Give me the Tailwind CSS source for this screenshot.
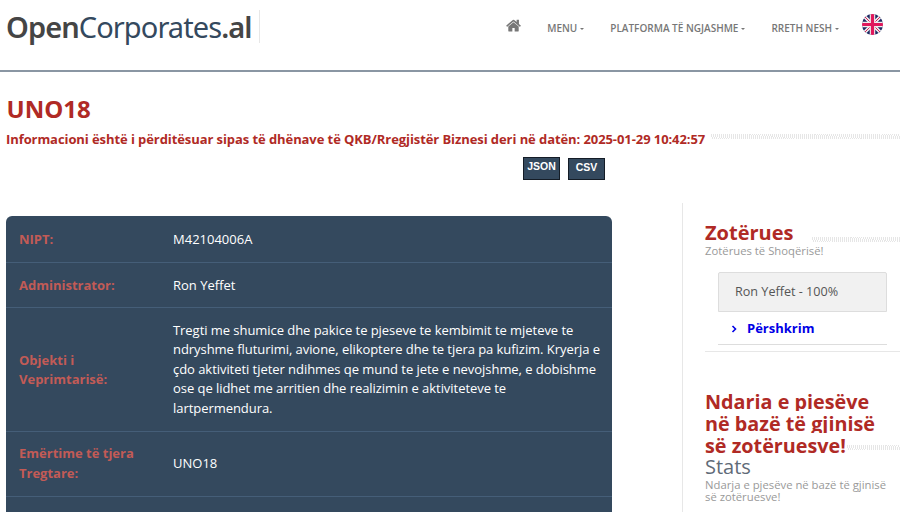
<!DOCTYPE html>
<html lang="sq">
<head>
  <meta charset="UTF-8" />
  <title>UNO18 - OpenCorporates.al</title>
  <script src="https://cdn.jsdelivr.net/npm/@tailwindcss/browser@4"></script>
</head>
<body class="bg-white font-['Open_Sans',sans-serif] text-[#333] h-[512px] w-[900px] overflow-hidden">

  <!-- Navbar -->
  <header class="h-[72px] border-b-2 border-[#8a96a3] flex justify-between">
    <div class="pl-[6px] pt-[10px] flex items-start">
      <div class="h-[33px] w-[254px] border-r border-[#e7e7e7] font-['Noto_Sans',sans-serif] text-[29px] leading-[34px] tracking-[-0.92px] whitespace-nowrap">
        <span class="font-semibold text-[#454545]">Open</span><span class="text-[#34495e]">Corporates</span><span class="font-semibold text-[#454545]">.al</span>
      </div>
    </div>
    <nav class="flex items-start pr-[17px] text-[#777] text-[10px] font-semibold">
      <svg class="mt-[19px] mr-[26px] w-[15px] h-[14px]" viewBox="0 0 1664 1408" fill="#777"><path d="M1408 768v480q0 26-19 45t-45 19H960V928H704v384H320q-26 0-45-19t-19-45V768q0-1 .5-3t.5-3l575-474 575 474q1 2 1 6zm223-69-62 74q-8 9-21 11h-3q-13 0-21-7L832 200 140 777q-12 8-24 7-13-2-21-11l-62-74q-8-10-7-23.500t11-21.500L756 27q32-27 76-27t76 27l272 227V37q0-14 9-23t23-9h192q14 0 23 9t9 23v454l219 182q10 8 11 21.500t-7 23.500z"/></svg>
      <a class="mt-[21px] mr-[26px] flex items-center leading-[14px]">MENU<span class="ml-[3px] mt-[1px] border-x-[2.500px] border-t-[2.500px] border-x-transparent border-t-[#777]"></span></a>
      <a class="mt-[21px] mr-[26px] flex items-center leading-[14px]">PLATFORMA TË NGJASHME<span class="ml-[3px] mt-[1px] border-x-[2.500px] border-t-[2.500px] border-x-transparent border-t-[#777]"></span></a>
      <a class="mt-[21px] mr-[23px] flex items-center leading-[14px]">RRETH NESH<span class="ml-[3px] mt-[1px] border-x-[2.500px] border-t-[2.500px] border-x-transparent border-t-[#777]"></span></a>
      <svg class="mt-[14px] w-[21px] h-[21px]" viewBox="0 0 21 21">
        <defs><clipPath id="flagClip"><circle cx="10.500" cy="10.500" r="10.500" /></clipPath></defs>
        <g clip-path="url(#flagClip)">
          <rect width="21" height="21" fill="#1f2a63" />
          <path d="M0 0 21 21M21 0 0 21" stroke="#eee" stroke-width="3.500" />
          <path d="M0 0 21 21M21 0 0 21" stroke="#d8205a" stroke-width="1" />
          <path d="M10.500 0V21M0 10.500H21" stroke="#eee" stroke-width="5.500" />
          <path d="M10.500 0V21M0 10.500H21" stroke="#e0185c" stroke-width="3.200" />
        </g>
      </svg>
    </nav>
  </header>

  <!-- Page heading -->
  <section class="pl-[6.500px] pt-[23px] h-[131px]">
    <h1 class="text-[24px] leading-[28px] font-bold text-[#b02a25]">UNO18</h1>
    <div class="mt-[7px] -ml-[0.500px] flex items-center">
      <h2 class="text-[13px] leading-[18px] font-bold text-[#b02a25] whitespace-nowrap tracking-[-0.08px]">Informacioni është i përditësuar sipas të dhënave të QKB/Rregjistër Biznesi deri në datën: 2025-01-29 10:42:57</h2>
      <div class="ml-[6px] mb-[5px] h-[5px] flex-1 bg-[repeating-linear-gradient(100deg,#e6e6e6_0,#e6e6e6_1px,#ffffff_1px,#ffffff_2px)]"></div>
    </div>
    <div class="mt-[9px] ml-[516.500px] flex items-start gap-[8px] font-['Liberation_Sans',sans-serif] text-[10.500px] font-bold text-white">
      <a class="w-[37px] h-[23px] bg-[#34495e] border border-[#141c26] text-center leading-[16px]">JSON</a>
      <a class="mt-[1px] w-[37px] h-[22px] bg-[#34495e] border border-[#141c26] text-center leading-[17px]">CSV</a>
    </div>
  </section>

  <main class="flex items-start">
    <!-- Company details -->
    <div class="w-[682px] pl-[6px] pt-[13px]">
      <div class="w-[606px] bg-[#34495e] rounded-t-[6px] text-[13px] text-white">
        <div class="h-[47px] pt-[1px] border-b border-[#455e78] flex items-center">
          <div class="w-[167px] pl-[13px] font-bold text-[#c25b56]">NIPT:</div>
          <div>M42104006A</div>
        </div>
        <div class="h-[45px] pt-[1px] border-b border-[#455e78] flex items-center">
          <div class="w-[167px] pl-[13px] font-bold text-[#c25b56]">Administrator:</div>
          <div>Ron Yeffet</div>
        </div>
        <div class="h-[124px] border-b border-[#455e78] flex items-center">
          <div class="w-[167px] pl-[13px] pr-[60px] font-bold leading-[19px] text-[#c25b56]">Objekti i Veprimtarisë:</div>
          <div class="w-[432px] leading-[19.500px] tracking-[-0.05px]">Tregti me shumice dhe pakice te pjeseve te kembimit te mjeteve te ndryshme fluturimi, avione, elikoptere dhe te tjera pa kufizim. Kryerja e çdo aktiviteti tjeter ndihmes qe mund te jete e nevojshme, e dobishme ose qe lidhet me arritien dhe realizimin e aktiviteteve te lartpermendura.</div>
        </div>
        <div class="h-[65px] border-b border-[#455e78] flex items-center">
          <div class="w-[167px] pl-[13px] pr-[20px] pb-[2px] font-bold leading-[20px] text-[#c25b56]">Emërtime të tjera Tregtare:</div>
          <div>UNO18</div>
        </div>
        <div class="h-[40px]"></div>
      </div>
    </div>

    <!-- Sidebar -->
    <aside class="flex-1 border-l border-[#e7e7e7] pl-[22px] pt-[18px] h-[320px]">
      <div class="flex items-end">
        <h3 class="text-[20px] leading-[24px] font-bold text-[#b02a25]">Zotërues</h3>
        <div class="ml-[19px] mb-[3px] h-[5px] flex-1 bg-[repeating-linear-gradient(100deg,#e6e6e6_0,#e6e6e6_1px,#ffffff_1px,#ffffff_2px)]"></div>
      </div>
      <p class="text-[11.300px] leading-[12px] text-[#999]">Zotërues të Shoqërisë!</p>
      <div class="ml-[13px] mt-[15px] w-[169px]">
        <div class="h-[40px] pl-[16px] bg-[#f1f1f1] border border-[#ddd] rounded-t-[2px] text-[12.600px] leading-[38px] text-[#555]">Ron Yeffet - 100%</div>
        <div class="h-[33px] pt-[1px] border-b border-[#ddd] flex items-center pl-[13px] text-[13px] font-bold text-[#0000e6]">
          <svg class="w-[6px] h-[8px] mr-[10px]" viewBox="0 0 6 8" fill="none" stroke="#0000e6" stroke-width="1.600"><path d="M1.500 1 4.500 4 1.500 7" /></svg>
          Përshkrim
        </div>
      </div>
      <div class="mt-[6px] border-b border-[#e7e7e7]"></div>

      <h3 class="mt-[37px] text-[19.800px] font-bold text-[#b02a25]">
        <div class="h-[22px] overflow-hidden leading-[26px] whitespace-nowrap">Ndaria e piesëve</div>
        <div class="h-[22px] overflow-hidden leading-[26px] whitespace-nowrap">në bazë të gjinisë</div>
        <div class="h-[22px] overflow-hidden leading-[26px] flex items-start whitespace-nowrap">së zotëruesve!<span class="ml-[1px] mt-[12px] h-[5px] flex-1 bg-[repeating-linear-gradient(100deg,#e6e6e6_0,#e6e6e6_1px,#ffffff_1px,#ffffff_2px)]"></span></div>
      </h3>
      <p class="mt-[1px] text-[20px] leading-[22px] text-[#5f6b78]">Stats</p>
      <p class="mt-[1px] text-[11.300px] leading-[12px] text-[#999] w-[190px]">Ndarja e pjesëve në bazë të gjinisë së zotëruesve!</p>
    </aside>
  </main>
</body>
</html>
